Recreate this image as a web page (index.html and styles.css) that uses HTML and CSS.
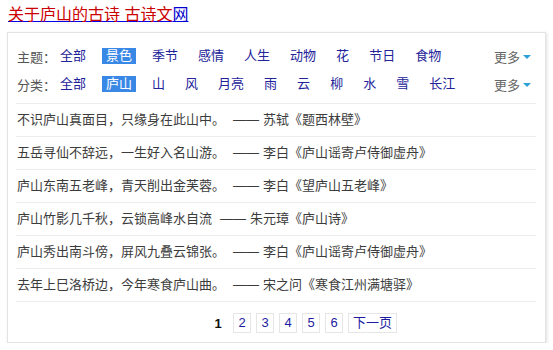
FILE: index.html
```html
<!DOCTYPE html>
<html lang="zh-CN">
<head>
  <meta charset="UTF-8">
  <meta name="viewport" content="width=device-width, initial-scale=1.0">
  <title>关于庐山的古诗</title>
  <link rel="stylesheet" href="styles.css">
</head>
<body>
  <!-- 标题 -->
  <h3 class="titulo"><a href="#"><span class="rojo">关于庐山的古诗 古诗文</span><span class="azul">网</span></a></h3>

  <div class="caja">
    <!-- 筛选 -->
    <div class="filtros">
      <div class="fila">
        <span class="etiqueta">主题：</span>
        <a class="item" href="#">全部</a>
        <a class="item activo" href="#">景色</a>
        <a class="item" href="#">季节</a>
        <a class="item" href="#">感情</a>
        <a class="item" href="#">人生</a>
        <a class="item" href="#">动物</a>
        <a class="item" href="#">花</a>
        <a class="item" href="#">节日</a>
        <a class="item" href="#">食物</a>
        <span class="mas">更多<i class="triangulo"></i></span>
      </div>
      <div class="fila">
        <span class="etiqueta">分类：</span>
        <a class="item" href="#">全部</a>
        <a class="item activo" href="#">庐山</a>
        <a class="item" href="#">山</a>
        <a class="item" href="#">风</a>
        <a class="item" href="#">月亮</a>
        <a class="item" href="#">雨</a>
        <a class="item" href="#">云</a>
        <a class="item" href="#">柳</a>
        <a class="item" href="#">水</a>
        <a class="item" href="#">雪</a>
        <a class="item" href="#">长江</a>
        <span class="mas">更多<i class="triangulo"></i></span>
      </div>
    </div>

    <!-- 名句 -->
    <ul class="lista">
      <li><span class="verso">不识庐山真面目，只缘身在此山中。</span><span class="raya">——</span><span class="autor">苏轼《题西林壁》</span></li>
      <li><span class="verso">五岳寻仙不辞远，一生好入名山游。</span><span class="raya">——</span><span class="autor">李白《庐山谣寄卢侍御虚舟》</span></li>
      <li><span class="verso">庐山东南五老峰，青天削出金芙蓉。</span><span class="raya">——</span><span class="autor">李白《望庐山五老峰》</span></li>
      <li><span class="verso">庐山竹影几千秋，云锁高峰水自流</span><span class="raya">——</span><span class="autor">朱元璋《庐山诗》</span></li>
      <li><span class="verso">庐山秀出南斗傍，屏风九叠云锦张。</span><span class="raya">——</span><span class="autor">李白《庐山谣寄卢侍御虚舟》</span></li>
      <li><span class="verso">去年上巳洛桥边，今年寒食庐山曲。</span><span class="raya">——</span><span class="autor">宋之问《寒食江州满塘驿》</span></li>
    </ul>

    <!-- 分页 -->
    <div class="paginas">
      <span class="actual">1</span>
      <a class="pag" href="#">2</a>
      <a class="pag" href="#">3</a>
      <a class="pag" href="#">4</a>
      <a class="pag" href="#">5</a>
      <a class="pag" href="#">6</a>
      <a class="pag" href="#">下一页</a>
    </div>
  </div>
</body>
</html>
```

FILE: styles.css
```css
body {
  font-family: "Liberation Sans", "Noto Sans CJK SC", sans-serif;
  margin: 0;
  padding: 0 7px;
  background-color: #fff;
  color: #333;
  font-size: 13px;
}

a {
  text-decoration: none;
}

.titulo {
  margin: 5px 0 8px 1px;
  font-size: 16px;
  font-weight: normal;
  line-height: 19px;
}

.titulo a {
  text-decoration: underline;
}

.titulo .rojo {
  color: #c00;
}

.titulo .azul {
  color: #00c;
}

.caja {
  border: 1px solid #e3e3e3;
  box-shadow: 1px 1px 3px rgba(0, 0, 0, 0.12);
  padding: 0 9px 9px 8px;
}

.filtros {
  padding: 9px 0 5px;
  border-bottom: 1px solid #ececec;
}

.fila {
  display: flex;
  align-items: center;
  height: 28px;
  padding-left: 1px;
}

.etiqueta {
  color: #555;
}

.item {
  color: #222299;
  padding: 0 4px;
  margin-right: 12px;
  line-height: 16px;
}

.item.activo {
  background-color: #3a88e6;
  color: #fff;
}

.mas {
  margin-left: auto;
  margin-right: 5px;
  color: #666;
  display: flex;
  align-items: center;
}

.triangulo {
  display: inline-block;
  margin-left: 3px;
  margin-top: 1px;
  border-left: 4px solid transparent;
  border-right: 4px solid transparent;
  border-top: 4px solid #2ea0d8;
}

.lista {
  list-style: none;
  margin: 0;
  padding: 0;
}

.lista li {
  height: 32px;
  line-height: 32px;
  border-bottom: 1px solid #ececec;
  padding-left: 1px;
  color: #3c3c3c;
}

.raya {
  margin: 0 4px 0 8px;
}

.paginas {
  display: flex;
  align-items: center;
  gap: 5px;
  margin-top: 11px;
  padding-left: 193px;
  height: 20px;
}

.actual {
  font-weight: bold;
  color: #111;
  width: 18px;
  text-align: center;
  margin-right: 1px;
}

.pag {
  color: #1c1c9e;
  border: 1px solid #e6e6e6;
  height: 18px;
  line-height: 18px;
  min-width: 8px;
  padding: 0 4px;
  text-align: center;
}
```
